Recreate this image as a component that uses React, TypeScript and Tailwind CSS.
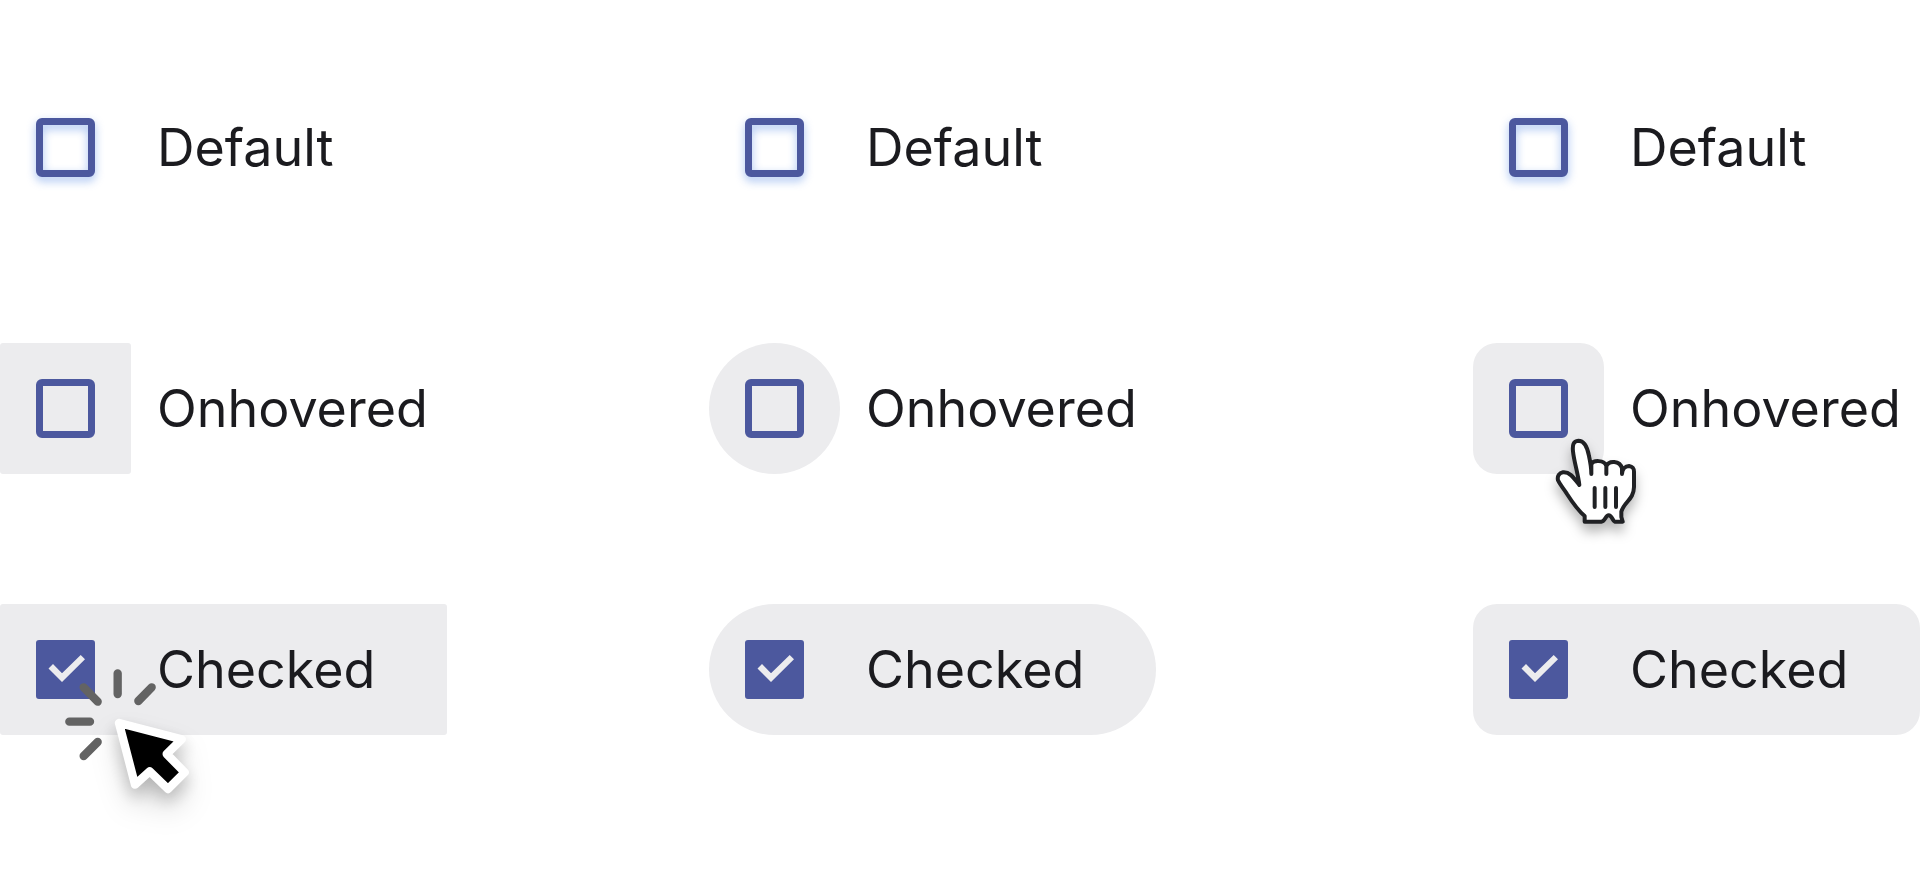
import { useId, useState, type ReactNode } from "react";

type Shape = "square" | "round" | "soft";

const haloShape: Record<Shape, string> = {
  square: "rounded-[3px]",
  round: "rounded-full",
  soft: "rounded-3xl",
};

interface OptionProps {
  label: string;
  shape: Shape;
  state: "default" | "hovered" | "checked";
  children?: ReactNode;
}

function Option({ label, shape, state, children }: OptionProps) {
  const id = useId();
  const [checked, setChecked] = useState(state === "checked");
  const fill = `bg-[#ececee] ${haloShape[shape]}`;

  return (
    <div
      className={`relative flex w-[447px] items-center gap-[26px] ${state === "checked" ? fill : ""}`}
    >
      <span
        className={`grid size-[131px] shrink-0 place-items-center ${state === "hovered" ? fill : ""}`}
      >
        <input
          id={id}
          type="checkbox"
          checked={checked}
          onChange={(e) => setChecked(e.target.checked)}
          className={`col-start-1 row-start-1 m-0 size-[59px] appearance-none rounded-md border-[7px] border-[#4c589e] checked:rounded-[3px] checked:bg-[#4c589e] ${
            state === "default" ? "drop-shadow-[0_4px_5px_rgba(60,120,225,0.45)]" : ""
          }`}
        />
        {checked && (
          <svg
            viewBox="0 0 59 59"
            className="pointer-events-none col-start-1 row-start-1 size-[59px]"
            aria-hidden="true"
          >
            <path d="M12.5 28.5 17 24l9 9.2L44.7 15l4.3 4.3L26 42Z" fill="#ececee" />
          </svg>
        )}
      </span>
      <label
        htmlFor={id}
        className="font-['Inter',sans-serif] text-[52px] leading-[78px] text-[#1b1b1f]"
      >
        {label}
      </label>
      {children}
    </div>
  );
}

function ClickPointer() {
  return (
    <svg
      viewBox="0 0 600 600"
      className="pointer-events-none absolute top-9 left-5 size-[200px] overflow-visible"
      aria-hidden="true"
    >
      <g stroke="#636363" strokeWidth="25" strokeLinecap="round">
        <path d="M293 100V162M191 142 233 185M395 142 355 183M148 245H210M233 306 191 348" />
      </g>
      <g className="[filter:drop-shadow(0_24px_24px_rgba(0,0,0,0.18))_drop-shadow(0_48px_40px_rgba(0,0,0,0.14))]">
        <path
          d="M297 249 485 298 440 342 494 397 444 447 389 394 345 434Z"
          fill="#000"
          stroke="#fff"
          strokeWidth="25"
          strokeLinejoin="round"
        />
      </g>
    </svg>
  );
}

function HandPointer() {
  return (
    <svg
      viewBox="0 0 390 390"
      className="pointer-events-none absolute top-[77px] left-[57px] size-[130px] overflow-visible drop-shadow-[0_8px_6px_rgba(0,0,0,0.28)]"
      fill="none"
      stroke="#202124"
      strokeWidth="12"
      strokeLinecap="round"
      strokeLinejoin="round"
      aria-hidden="true"
    >
      <path
        d="M164 305V288C145 272 127 247 111 222C101 205 90 195 84 181C81 168 88 159 99 157C119 155 131 173 148 195C145 164 132 125 129 94C127 75 130 63 145 62C163 62 173 85 177 108C181 126 184 143 184 162V132C190 120 223 119 229 138V162V139C236 120 270 121 276 145V162C277 146 286 138 297 138C309 140 313 145 312 159V201C311 240 283 244 274 275V291L278 305H254C248 303 246 286 236 286C226 286 226 304 214 305Z"
        fill="#fff"
      />
      <path d="M194 204V261M226 204V261M258 204V261" />
    </svg>
  );
}

function Column({ shape, hoverPointer, clickPointer }: {
  shape: Shape;
  hoverPointer?: ReactNode;
  clickPointer?: ReactNode;
}) {
  return (
    <div className="flex flex-col gap-[130px]">
      <Option label="Default" shape={shape} state="default" />
      <Option label="Onhovered" shape={shape} state="hovered">
        {hoverPointer}
      </Option>
      <Option label="Checked" shape={shape} state="checked">
        {clickPointer}
      </Option>
    </div>
  );
}

export default function App() {
  return (
    <main className="grid min-h-screen grid-cols-[709fr_764fr_447px] content-start bg-white pt-[82px]">
      <Column shape="square" clickPointer={<ClickPointer />} />
      <Column shape="round" />
      <Column shape="soft" hoverPointer={<HandPointer />} />
    </main>
  );
}
